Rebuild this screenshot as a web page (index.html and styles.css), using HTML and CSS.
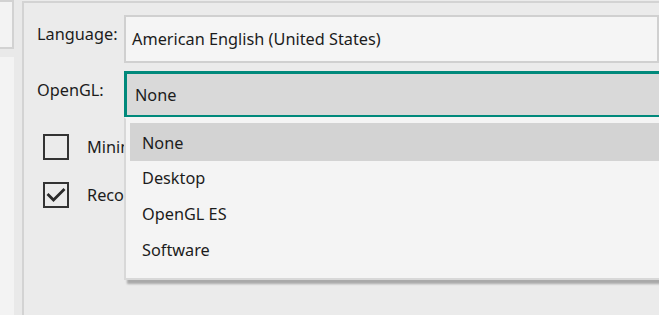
FILE: index.html
```html
<!doctype html>
<html lang="en">
  <head>
    <meta charset="UTF-8" />
    <title>Settings</title>
    <link rel="stylesheet" href="styles.css">
  </head>
  <body>
    <div class="window">
      <div class="sidebar">
        <div class="side-btn"></div>
        <div class="side-list"></div>
      </div>

      <div class="panel">
        <div class="field">
          <label class="field-label">Language:</label>
          <div class="combo">American English (United States)</div>
        </div>

        <div class="field">
          <label class="field-label">OpenGL:</label>
          <div class="combo-wrap">
            <div class="combo combo-open">None</div>
            <ul class="popup">
              <li class="popup-item selected">None</li>
              <li class="popup-item">Desktop</li>
              <li class="popup-item">OpenGL ES</li>
              <li class="popup-item">Software</li>
            </ul>
          </div>
        </div>

        <div class="checks">
          <div class="check-row">
            <span class="checkbox"></span>
            <span class="check-label">Minimize to tray</span>
          </div>
          <div class="check-row">
            <span class="checkbox">
              <svg width="22" height="22" viewBox="0 0 22 22">
                <polyline points="2.5,10 8.5,16 19.5,5" fill="none" stroke="#2b2b2b" stroke-width="2.8" />
              </svg>
            </span>
            <span class="check-label">Record recent files</span>
          </div>
        </div>
      </div>
    </div>
  </body>
</html>
```

FILE: styles.css
```css
* {
  margin: 0;
  padding: 0;
  box-sizing: border-box;
}

body {
  font-family: "Noto Sans", "Open Sans", sans-serif;
  font-size: 16.3px;
  color: #1c1c1c;
  background: #ebebeb;
  overflow: hidden;
}

.window {
  display: flex;
  width: 659px;
  height: 315px;
  overflow: hidden;
}

/* left strip */
.sidebar {
  width: 22px;
  flex-shrink: 0;
  display: flex;
  flex-direction: column;
  background: #e9e9e9;
}

.side-btn {
  width: 14px;
  height: 49px;
  background: #f3f3f3;
  border: 2px solid #d2d2d2;
  border-left: none;
}

.side-list {
  width: 14px;
  flex: 1;
  margin-top: 8px;
  background: #f3f3f3;
}

/* main panel */
.panel {
  flex: 1;
  margin-top: 1px;
  border-top: 2px solid #d3d3d3;
  border-left: 2px solid #d3d3d3;
  background: #ebebeb;
  padding: 12px 0 0 13px;
  display: flex;
  flex-direction: column;
  gap: 8px;
  min-width: 0;
}

.field {
  display: flex;
  align-items: flex-start;
}

.field-label {
  width: 87px;
  flex-shrink: 0;
  padding-top: 8px;
}

.combo-wrap {
  position: relative;
  z-index: 1;
}

.combo {
  width: 600px;
  height: 48px;
  display: flex;
  align-items: center;
  padding-left: 6px;
  background: #f5f5f5;
  border: 2px solid #d0d0d0;
}

.combo-open {
  height: 47px;
  padding-left: 8px;
  background: #d9d9d9;
  border: 3px solid #00897b;
}

.popup {
  position: absolute;
  top: 46px;
  left: 0;
  width: 600px;
  height: 163px;
  list-style: none;
  background: #f4f4f4;
  border: 2px solid #d8d8d8;
  border-top-color: #f4f4f4;
  padding: 4px 0 0 4px;
  box-shadow: 3px 4px 2px rgba(0, 0, 0, 0.28);
}

.popup-item {
  height: 36px;
  display: flex;
  align-items: center;
  padding-left: 12px;
  padding-top: 1px;
}

.popup-item.selected {
  height: 38px;
  margin-bottom: -2px;
  background: #d3d3d3;
}

.checks {
  display: flex;
  flex-direction: column;
  gap: 22px;
  padding: 8px 0 0 6px;
}

.check-row {
  display: flex;
  align-items: center;
  gap: 18px;
  white-space: nowrap;
}

.checkbox {
  width: 26px;
  height: 26px;
  flex-shrink: 0;
  border: 2px solid #333333;
  background: #ebebeb;
  display: flex;
  align-items: center;
  justify-content: center;
}
```
